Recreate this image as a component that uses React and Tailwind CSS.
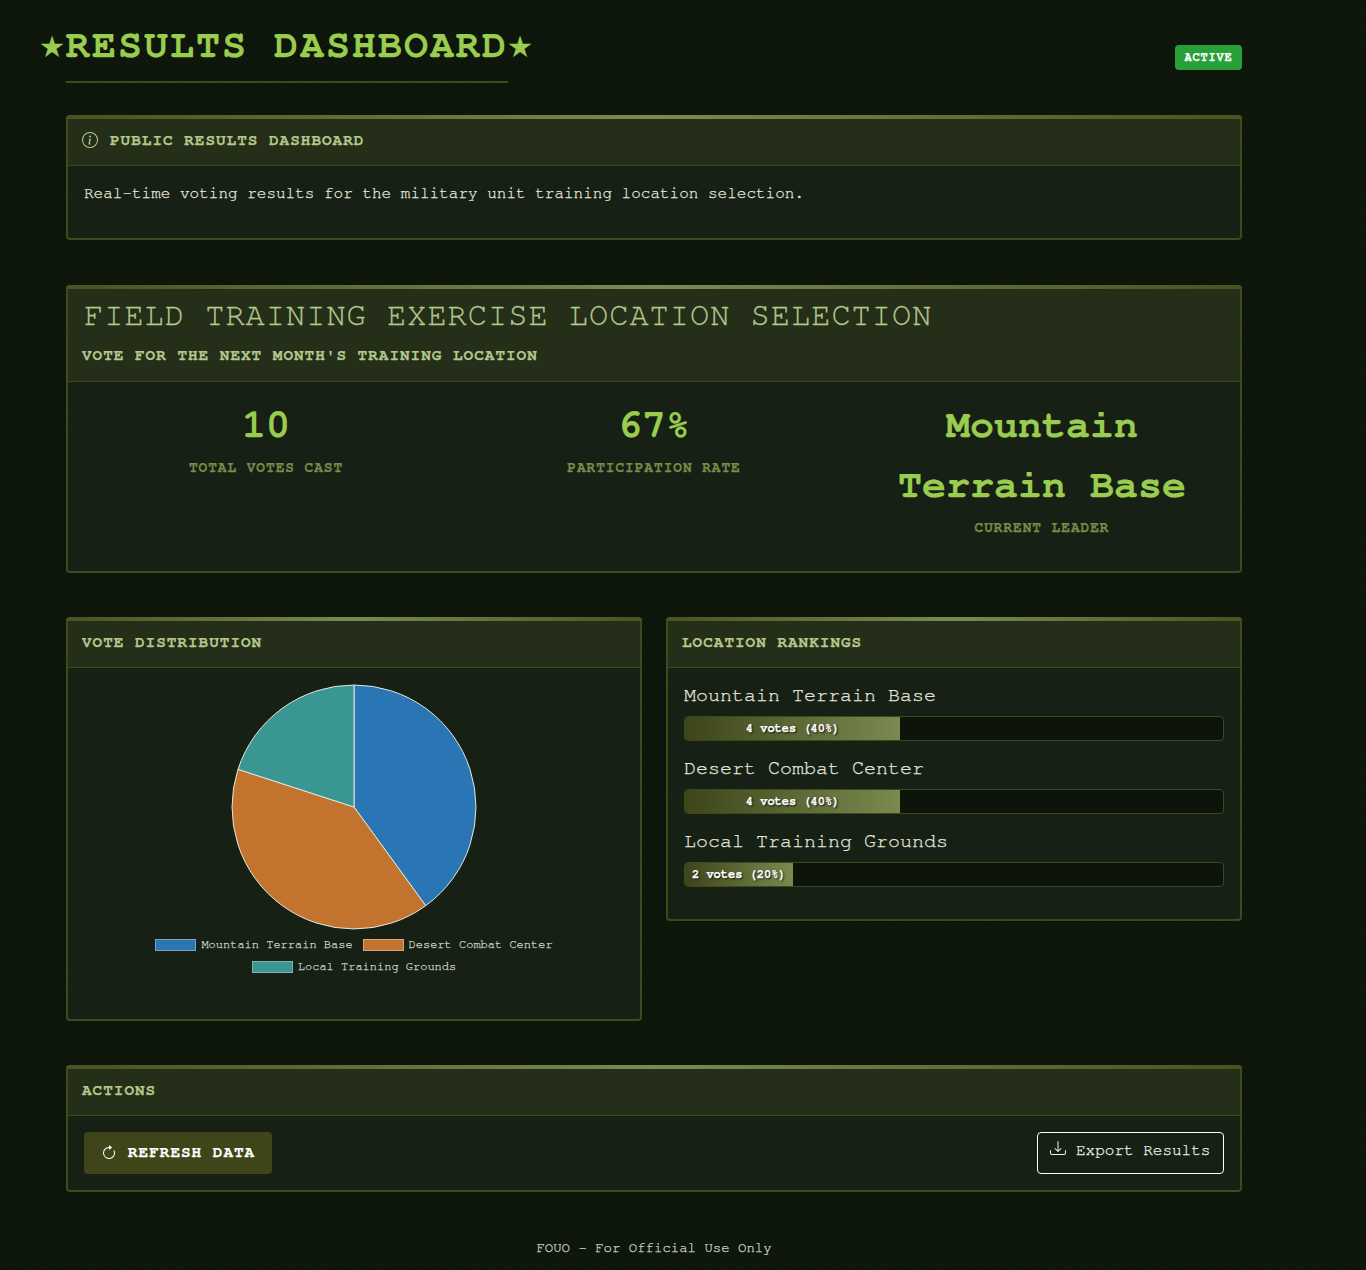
import { Fragment } from 'react'

const rankings = [
  { name: 'Mountain Terrain Base', label: '4 votes (40%)', pct: 40 },
  { name: 'Desert Combat Center', label: '4 votes (40%)', pct: 40 },
  { name: 'Local Training Grounds', label: '2 votes (20%)', pct: 20 },
]

const legend = [
  { name: 'Mountain Terrain Base', swatch: 'bg-[#2a75b3] border-[#7f9fbd]' },
  { name: 'Desert Combat Center', swatch: 'bg-[#c2742e] border-[#d0a680]' },
  { name: 'Local Training Grounds', swatch: 'bg-[#3a9690] border-[#82b0ad]' },
]

const stats = [
  { value: '10', label: 'TOTAL VOTES CAST' },
  { value: '67%', label: 'PARTICIPATION RATE' },
  { value: 'Mountain Terrain Base', label: 'CURRENT LEADER' },
]

function Card({ className = '', children }) {
  return (
    <div className={`relative rounded-[4px] border-2 border-[#3d4a1a] bg-[#172015] ${className}`}>
      <div className="absolute -left-[2px] -right-[2px] -top-[2px] h-[4px] rounded-t-[4px] bg-[linear-gradient(90deg,#4a5320,#7a8a50,#4a5320)]" />
      {children}
    </div>
  )
}

function CardHeader({ children }) {
  return (
    <div className="flex items-center border-b border-[#3d4a1a] bg-[#252e18] px-[14px] pb-[13px] pt-[11px] text-base leading-6 font-bold tracking-[1px] text-[#b4c98c]">
      {children}
    </div>
  )
}

export default function App() {
  return (
    <div className="h-[1270px] bg-[repeating-linear-gradient(45deg,#0d140a,#0d140a_2px,#0f180d_2px,#0f180d_4px)] pl-[66px] font-['FreeMono','Liberation_Mono',monospace] text-[#e4e8dc] [-webkit-text-stroke:0.25px]">
      <div className="w-[1176px]">
        {/* Header */}
        <div className="flex h-[115px] items-start justify-between">
          <h1 className="relative mt-[21px] text-[40px] leading-[48px] font-bold tracking-[2px] text-[#9acd4f]">
            <span className="absolute -left-[26px] top-0">★</span>
            RESULTS DASHBOARD
            <span className="absolute -right-[26px] top-0">★</span>
            <span className="absolute bottom-[-14px] left-0 right-0 h-[2px] bg-[#3d4a1a]" />
          </h1>
          <span className="mt-[45px] flex h-[25px] w-[67px] items-center justify-center rounded-[4px] bg-[#28a039] pb-[2px] text-xs font-bold tracking-[0.8px] text-white">
            ACTIVE
          </span>
        </div>

        {/* Info */}
        <Card className="mb-[45px]">
          <CardHeader>
            <svg width="16" height="16" viewBox="0 0 16 16" fill="currentColor" className="mr-3">
              <path d="M8 15A7 7 0 1 1 8 1a7 7 0 0 1 0 14zm0 1A8 8 0 1 0 8 0a8 8 0 0 0 0 16z" />
              <path d="m8.93 6.588-2.29.287-.082.38.45.083c.294.07.352.176.288.469l-.738 3.468c-.194.897.105 1.319.808 1.319.545 0 1.178-.252 1.465-.598l.088-.416c-.2.176-.492.246-.686.246-.275 0-.375-.193-.304-.533L8.93 6.588zM9 4.5a1 1 0 1 1-2 0 1 1 0 0 1 2 0z" />
            </svg>
            PUBLIC RESULTS DASHBOARD
          </CardHeader>
          <div className="px-4 pb-[17px] pt-[15px]">
            <p className="mb-4 text-base leading-6">Real-time voting results for the military unit training location selection.</p>
          </div>
        </Card>

        {/* Poll summary */}
        <Card className="mb-[44px]">
          <div className="border-b border-[#3d4a1a] bg-[#252e18] px-[14px] pb-[14px] pt-[9px]">
            <h2 className="mb-[9px] pl-[2px] text-[32px] leading-[38px] tracking-[1px] text-[#b4c98c]">FIELD TRAINING EXERCISE LOCATION SELECTION</h2>
            <div className="text-base leading-6 font-bold tracking-[1px] text-[#b4c98c]">VOTE FOR THE NEXT MONTH'S TRAINING LOCATION</div>
          </div>
          <div className="px-4 pb-[17px] pt-[13px]">
            <div className="-mx-3 grid grid-cols-3">
              {stats.map(stat => (
                <div key={stat.label} className="mb-4 px-3 text-center">
                  <div className="mb-[2px] text-[40px] leading-[60px] font-bold text-[#9acd4f]">{stat.value}</div>
                  <div className="text-[14.4px] leading-[21px] font-bold tracking-[1px] text-[#7a8c48]">{stat.label}</div>
                </div>
              ))}
            </div>
          </div>
        </Card>

        <div className="mb-[44px] grid grid-cols-2 items-start gap-6">
          {/* Chart */}
          <Card>
            <CardHeader>VOTE DISTRIBUTION</CardHeader>
            <div className="p-4">
              <div className="flex h-[319px] flex-col items-center">
                <svg width="246" height="246" viewBox="0 0 246 246" className="shrink-0">
                  <g stroke="#e4e6e0" strokeWidth="1" strokeLinejoin="round">
                    <path d="M123 123 L123 1 A122 122 0 0 1 194.7 221.7 Z" fill="#2a75b3" />
                    <path d="M123 123 L194.7 221.7 A122 122 0 0 1 7 85.3 Z" fill="#c2742e" />
                    <path d="M123 123 L7 85.3 A122 122 0 0 1 123 1 Z" fill="#3a9690" />
                  </g>
                </svg>
                <div className="mt-[9px] flex w-[420px] flex-wrap justify-center gap-x-[10px] gap-y-[10px]">
                  {legend.map(item => (
                    <div key={item.name} className="flex h-3 items-center gap-[5px] text-xs leading-3 text-[#d4d8cc]">
                      <span className={`h-3 w-[41px] border ${item.swatch}`} />
                      <span className="pb-[3px]">{item.name}</span>
                    </div>
                  ))}
                </div>
              </div>
            </div>
          </Card>

          {/* Rankings */}
          <Card>
            <CardHeader>LOCATION RANKINGS</CardHeader>
            <div className="p-4">
              {rankings.map(row => (
                <Fragment key={row.name}>
                  <div className="mb-[10px] text-xl leading-[22px]">{row.name}</div>
                  <div className="mb-4 h-[25px] overflow-hidden rounded-[4px] border border-[#3d4a1a] bg-[#0d140a]">
                    <div
                      className="flex h-full items-center justify-center bg-[linear-gradient(90deg,#3d4519,#7a8a50)] pb-[2px] text-xs font-bold text-white [text-shadow:1px_1px_2px_#000]"
                      style={{ width: `${row.pct}%` }}
                    >
                      {row.label}
                    </div>
                  </div>
                </Fragment>
              ))}
            </div>
          </Card>
        </div>

        {/* Actions */}
        <Card className="mb-[45px]">
          <CardHeader>ACTIONS</CardHeader>
          <div className="flex items-start justify-between p-4">
            <button className="flex h-[42px] w-[188px] items-center gap-[11px] rounded-[4px] bg-[#3d4519] pb-[2px] pl-[17px] text-base font-bold tracking-[1px] text-white">
              <svg width="16" height="16" viewBox="0 0 16 16" fill="currentColor" className="mt-[2px]">
                <path fillRule="evenodd" d="M8 3a5 5 0 1 0 4.546 2.914.5.5 0 0 1 .908-.417A6 6 0 1 1 8 2v1z" />
                <path d="M8 4.466V.534a.25.25 0 0 1 .41-.192l2.36 1.966c.12.1.12.284 0 .384L8.41 4.658A.25.25 0 0 1 8 4.466z" />
              </svg>
              REFRESH DATA
            </button>
            <button className="flex h-[42px] w-[187px] items-start gap-[10px] rounded-[4px] border border-white pl-3 pt-[5px] text-base leading-6 text-[#f0f2ec]">
              <svg width="16" height="16" viewBox="0 0 16 16" fill="currentColor" className="mt-[2px]">
                <path d="M.5 9.9a.5.5 0 0 1 .5.5v2.5a1 1 0 0 0 1 1h12a1 1 0 0 0 1-1v-2.5a.5.5 0 0 1 1 0v2.5a2 2 0 0 1-2 2H2a2 2 0 0 1-2-2v-2.5a.5.5 0 0 1 .5-.5z" />
                <path d="M7.646 11.854a.5.5 0 0 0 .708 0l3-3a.5.5 0 0 0-.708-.708L8.5 10.293V1.5a.5.5 0 0 0-1 0v8.793L5.354 8.146a.5.5 0 1 0-.708.708l3 3z" />
              </svg>
              Export Results
            </button>
          </div>
        </Card>

        <div className="pt-px text-center text-sm leading-[21px] text-[#d4d8cc]">FOUO - For Official Use Only</div>
      </div>
    </div>
  )
}
